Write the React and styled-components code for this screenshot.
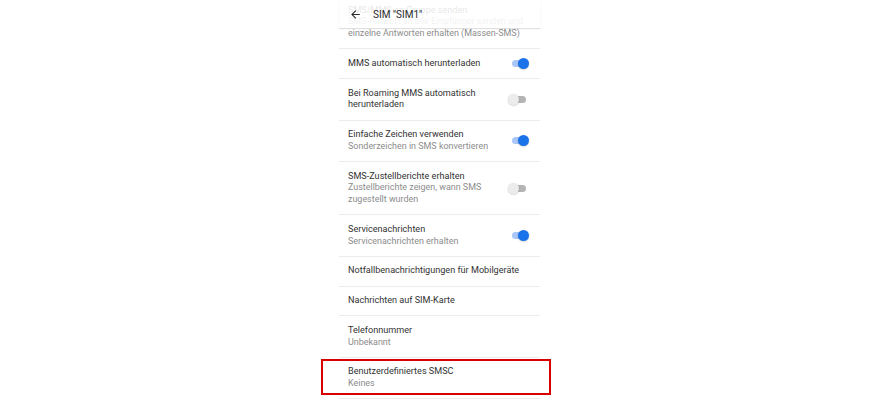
import React from "react"
import styled, { createGlobalStyle } from "styled-components"

const GlobalStyle = createGlobalStyle`
  html, body {
    margin: 0;
    padding: 0;
    background: #fff;
  }
  body {
    font-family: Roboto, "Liberation Sans", Arial, sans-serif;
    -webkit-font-smoothing: antialiased;
  }
`

const Page = styled.div`
  width: 879px;
  height: 400px;
  overflow: hidden;
  background: #fff;
`

const Phone = styled.div`
  position: relative;
  display: flex;
  flex-direction: column;
  width: 201px;
  margin: 0 auto;
`

const Header = styled.div`
  position: absolute;
  top: 0;
  left: 0;
  right: 0;
  height: 28px;
  display: flex;
  align-items: center;
  gap: 11px;
  padding-left: 10px;
  background: rgba(255, 255, 255, 0.88);
  box-shadow: 0 1px 1px rgba(0, 0, 0, 0.12);
  z-index: 2;
`

const HeaderTitle = styled.div`
  font-size: 10px;
  color: #2a2a2a;
`

const List = styled.div`
  margin-top: -4px;
  display: flex;
  flex-direction: column;
`

const Row = styled.div`
  position: relative;
  display: flex;
  align-items: center;
  gap: 6px;
  padding: 8.5px 11px 8.5px 9px;
  border-bottom: 1px solid #ececec;

  ${(p) =>
    p.$highlight &&
    `
    &::after {
      content: "";
      position: absolute;
      top: 1px;
      bottom: 3px;
      left: -18px;
      right: -11px;
      border: 2px solid #d90000;
      pointer-events: none;
    }
  `}
`

const Texts = styled.div`
  flex: 1;
  min-width: 0;
  display: flex;
  flex-direction: column;
`

const Title = styled.div`
  font-size: 9.1px;
  line-height: 11.75px;
  color: #333;
  white-space: nowrap;
`

const Summary = styled.div`
  font-size: 8.95px;
  line-height: 11.75px;
  color: #8c8c8c;
  white-space: nowrap;
`

const Switch = styled.div`
  position: relative;
  width: 21px;
  height: 11px;
  flex-shrink: 0;

  &::before {
    content: "";
    position: absolute;
    left: 4px;
    right: 3px;
    top: 2px;
    height: 7px;
    border-radius: 4px;
    background: ${(p) => (p.$on ? "#a9c6f7" : "#b4b4b4")};
  }

  &::after {
    content: "";
    position: absolute;
    top: 0;
    left: ${(p) => (p.$on ? "10px" : "0")};
    width: 11px;
    height: 11px;
    border-radius: 50%;
    background: ${(p) => (p.$on ? "#1a73e8" : "#ececec")};
    box-shadow: 0 0.5px 1.5px rgba(0, 0, 0, 0.25);
  }
`

const BackArrow = () => (
  <svg width="13" height="13" viewBox="0 0 24 24" fill="#2a2a2a">
    <path d="M20 11H7.83l5.59-5.59L12 4l-8 8 8 8 1.41-1.41L7.83 13H20v-2z" />
  </svg>
)

const items = [
  {
    title: "SMS/MMS an Gruppe senden",
    summary: ["SMS-Antwort an alle Empfänger senden und", "einzelne Antworten erhalten (Massen-SMS)"],
  },
  { title: "MMS automatisch herunterladen", toggle: true },
  { title: ["Bei Roaming MMS automatisch", "herunterladen"], toggle: false },
  { title: "Einfache Zeichen verwenden", summary: ["Sonderzeichen in SMS konvertieren"], toggle: true },
  {
    title: "SMS-Zustellberichte erhalten",
    summary: ["Zustellberichte zeigen, wann SMS", "zugestellt wurden"],
    toggle: false,
  },
  { title: "Servicenachrichten", summary: ["Servicenachrichten erhalten"], toggle: true },
  { title: "Notfallbenachrichtigungen für Mobilgeräte" },
  { title: "Nachrichten auf SIM-Karte" },
  { title: "Telefonnummer", summary: ["Unbekannt"] },
  { title: "Benutzerdefiniertes SMSC", summary: ["Keines"], highlight: true },
]

export default function App() {
  return (
    <Page>
      <GlobalStyle />
      <Phone>
        <Header>
          <BackArrow />
          <HeaderTitle>SIM "SIM1"</HeaderTitle>
        </Header>
        <List>
          {items.map((item, i) => {
            const titles = Array.isArray(item.title) ? item.title : [item.title]
            return (
              <Row key={i} $highlight={item.highlight}>
                <Texts>
                  {titles.map((t) => (
                    <Title key={t}>{t}</Title>
                  ))}
                  {item.summary &&
                    item.summary.map((s) => <Summary key={s}>{s}</Summary>)}
                </Texts>
                {item.toggle !== undefined && <Switch $on={item.toggle} />}
              </Row>
            )
          })}
        </List>
      </Phone>
    </Page>
  )
}
